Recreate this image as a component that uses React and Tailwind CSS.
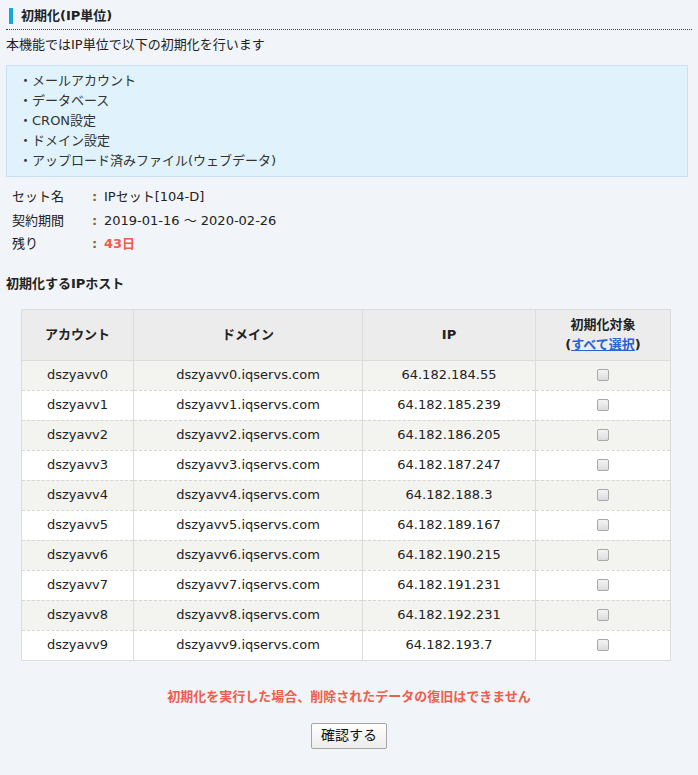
import { useState } from 'react'

const ITEMS = [
  'メールアカウント',
  'データベース',
  'CRON設定',
  'ドメイン設定',
  'アップロード済みファイル(ウェブデータ)',
]

const HOSTS = [
  ['dszyavv0', '64.182.184.55'],
  ['dszyavv1', '64.182.185.239'],
  ['dszyavv2', '64.182.186.205'],
  ['dszyavv3', '64.182.187.247'],
  ['dszyavv4', '64.182.188.3'],
  ['dszyavv5', '64.182.189.167'],
  ['dszyavv6', '64.182.190.215'],
  ['dszyavv7', '64.182.191.231'],
  ['dszyavv8', '64.182.192.231'],
  ['dszyavv9', '64.182.193.7'],
]

export default function App() {
  const [checked, setChecked] = useState(HOSTS.map(() => false))

  function toggle(i) {
    setChecked(prev => prev.map((c, j) => (j === i ? !c : c)))
  }

  return (
    <div className="min-h-[775px] bg-[#f1f4f8] text-[#222] text-[13px] font-['DejaVu_Sans','Noto_Sans_CJK_JP',sans-serif] pb-6">

      {/* 見出し */}
      <div className="mx-[6px] pt-[7px] pb-[4px] border-b border-dotted border-[#444] flex items-center">
        <span className="w-[4px] h-[16px] bg-[#1aa3e8] ml-[3px] mr-[8px]" />
        <h1 className="font-bold text-[13px] leading-[18px]">初期化(IP単位)</h1>
      </div>

      <p className="px-[6px] mt-[6px] leading-[18px]">本機能ではIP単位で以下の初期化を行います</p>

      {/* 対象リスト */}
      <div className="mx-[6px] mt-[11px] w-[682px] bg-[#e0f2fb] border border-[#c8e1f6] py-[5px] px-[12px] text-[13px] leading-[20px] text-[#333]">
        {ITEMS.map(t => (
          <p key={t}>・{t}</p>
        ))}
      </div>

      {/* セット情報 */}
      <div className="mt-[11px] px-[12px] flex flex-col gap-[5px] leading-[18.5px]">
        <div className="flex">
          <span className="w-[80px]">セット名</span>
          <span className="w-[12px] font-bold text-[#8a6a1a]">:</span>
          <span>IPセット[104-D]</span>
        </div>
        <div className="flex">
          <span className="w-[80px]">契約期間</span>
          <span className="w-[12px] font-bold text-[#8a6a1a]">:</span>
          <span>2019-01-16 ～ 2020-02-26</span>
        </div>
        <div className="flex">
          <span className="w-[80px]">残り</span>
          <span className="w-[12px] font-bold text-[#8a6a1a]">:</span>
          <span className="font-bold text-[#f25c4a]">43日</span>
        </div>
      </div>

      <h2 className="px-[6px] mt-[21px] font-bold leading-[18px]">初期化するIPホスト</h2>

      {/* ホスト一覧 */}
      <table className="ml-[21px] mt-[16px] w-[650px] border-collapse border border-[#dcdcdc] text-center">
        <thead>
          <tr className="bg-[#ececec] h-[51px] font-bold">
            <th className="w-[112px] border border-[#dcdcdc]">アカウント</th>
            <th className="w-[229px] border border-[#dcdcdc]">ドメイン</th>
            <th className="w-[173px] border border-[#dcdcdc]">IP</th>
            <th className="border border-[#dcdcdc] leading-[20px]">
              初期化対象
              <br />
              (<a href="#" className="text-[#2a62d4] underline">すべて選択</a>)
            </th>
          </tr>
        </thead>
        <tbody>
          {HOSTS.map(([acc, ip], i) => (
            <tr
              key={acc}
              className={`h-[30px] ${i % 2 === 0 ? 'bg-[#f3f3ef]' : 'bg-white'} border-t border-dashed border-[#d6d6d6]`}
            >
              <td className="border-x border-solid border-[#dcdcdc]">{acc}</td>
              <td className="border-x border-solid border-[#dcdcdc]">{acc}.iqservs.com</td>
              <td className="border-x border-solid border-[#dcdcdc]">{ip}</td>
              <td className="border-x border-solid border-[#dcdcdc]">
                <input
                  type="checkbox"
                  checked={checked[i]}
                  onChange={() => toggle(i)}
                  className="appearance-none w-[12px] h-[12px] align-middle -mt-[2px] rounded-[2px] border border-[#a8a8a8] bg-gradient-to-b from-[#f4f4f4] to-[#dcdcdc] checked:bg-[#2a62d4]"
                />
              </td>
            </tr>
          ))}
        </tbody>
      </table>

      <p className="mt-[27px] text-center font-bold text-[#f25c4a] leading-[18px]">
        初期化を実行した場合、削除されたデータの復旧はできません
      </p>

      <div className="mt-[17px] flex justify-center">
        <button className="w-[76px] h-[26px] border border-[#a5a5a5] rounded-[2px] bg-gradient-to-b from-white to-[#ececec] text-[14px] text-[#111]">
          確認する
        </button>
      </div>
    </div>
  )
}
